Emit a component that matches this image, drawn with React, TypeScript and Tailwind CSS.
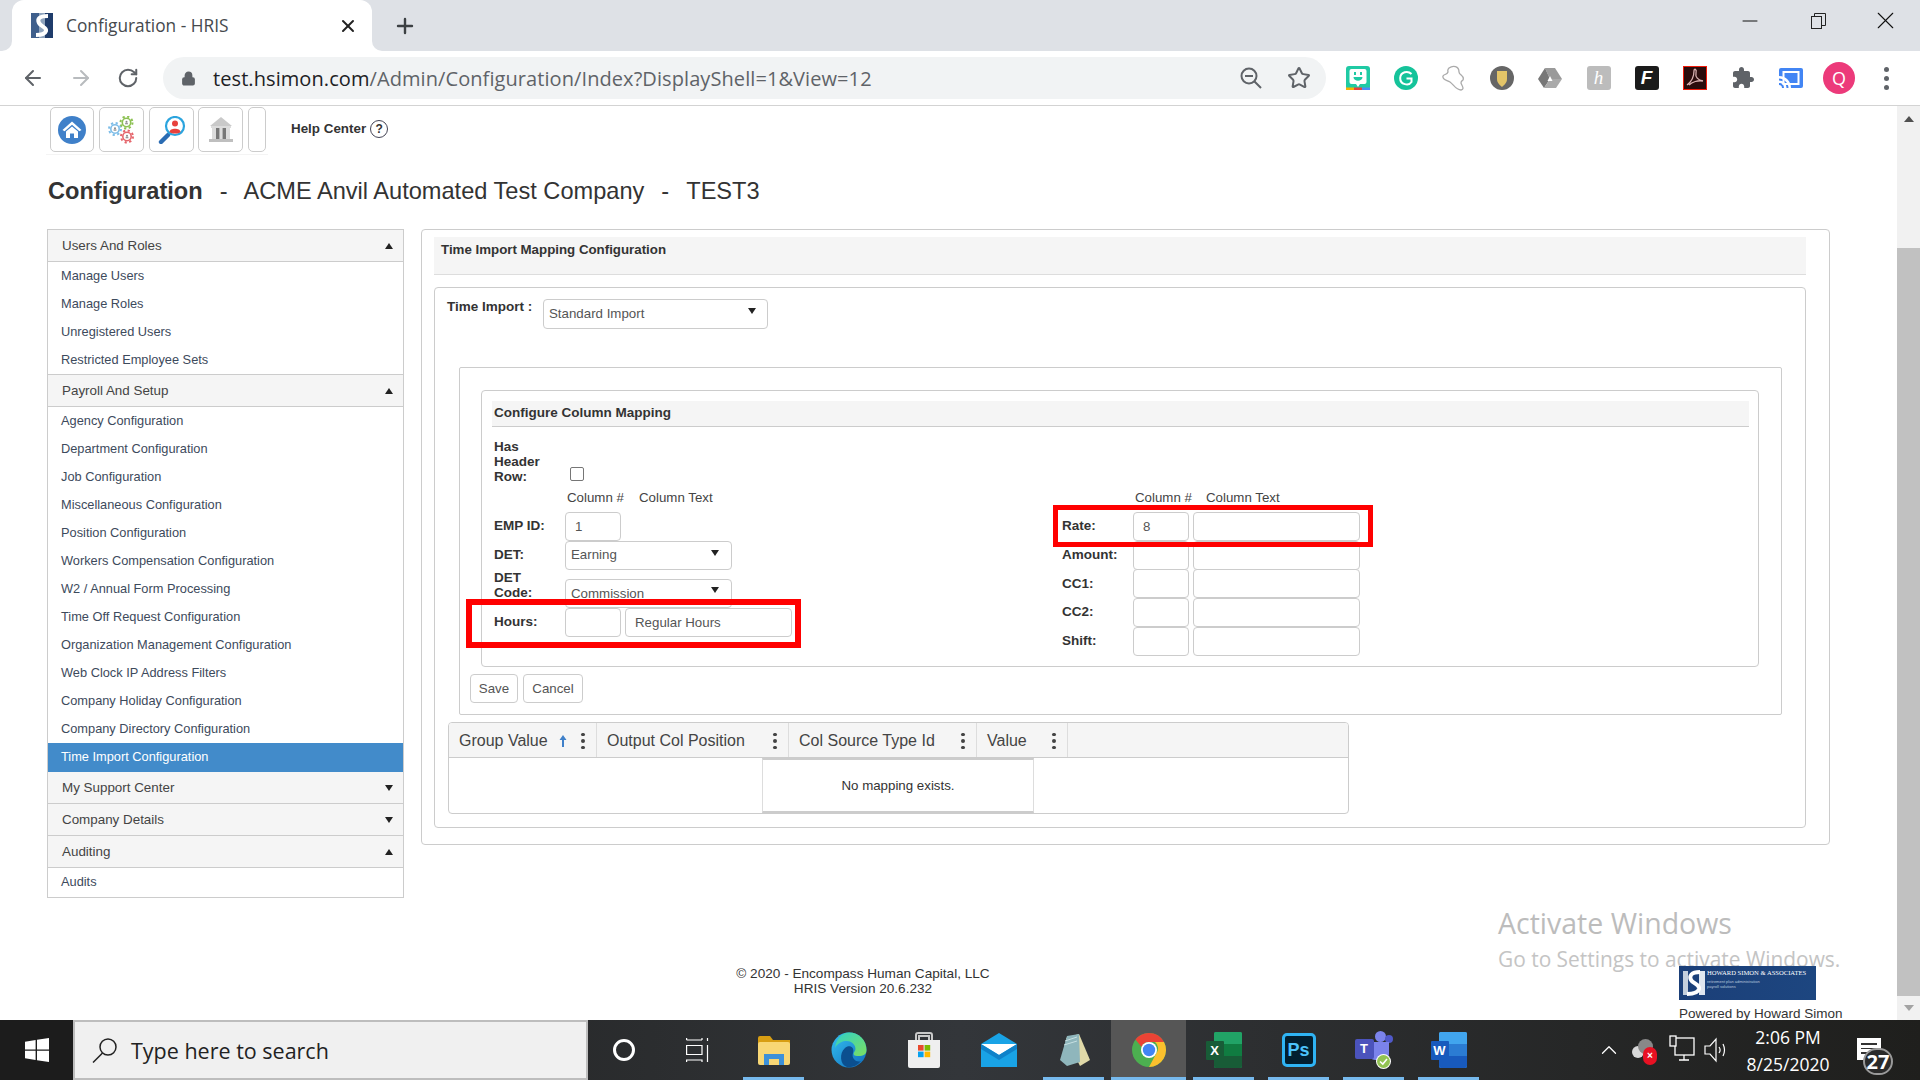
import React from "react";
import { ArrowLeft, ArrowRight, RotateCw, Star, Plus, X, Minus, Lock, ChevronUp } from "lucide-react";

const redBox = "absolute border-[#ff0000] pointer-events-none";
const field = "h-[29px] border border-[#cccccc] rounded-[4px] bg-white px-[9px] text-[13.3px] text-[#555] outline-none font-['Liberation_Sans',Arial,sans-serif]";

function Favicon() {
  return (
    <svg width="22" height="25" viewBox="0 0 22 25">
      <rect width="22" height="25" fill="#8ea3bd" />
      <rect x="0" y="0" width="8" height="25" fill="#3f5f8c" />
      <rect x="14" y="0" width="8" height="25" fill="#1f3c6b" />
      <path d="M17 3 C8 3 6 6 8 10 C10 14 16 14 15 18 C14 21 9 22 5 22" fill="none" stroke="#fff" strokeWidth="4" />
    </svg>
  );
}

function Gear({ cx, cy, c }: { cx: number; cy: number; c: string }) {
  return (
    <g>
      <circle cx={cx} cy={cy} r="6" fill="none" stroke={c} strokeWidth="2" strokeDasharray="2.2 2.5" />
      <circle cx={cx} cy={cy} r="4.2" fill="#fff" stroke={c} strokeWidth="1.6" />
      <circle cx={cx} cy={cy - 0.8} r="1" fill="#888" />
      <rect x={cx - 1.4} y={cy + 0.3} width="2.8" height="1.5" fill="#999" />
    </g>
  );
}

function HomeIcon() {
  return (
    <svg width="28" height="28" viewBox="0 0 28 28">
      <circle cx="14" cy="14" r="14" fill="#3f80c9" />
      <path d="M14 5.5 L23.5 14 L21.4 15.2 L14 8.8 L6.6 15.2 L4.5 14 Z" fill="#fff" />
      <path d="M8 15.5 L14 10.5 L20 15.5 V22 H16 V17.5 H12 V22 H8 Z" fill="#fff" />
    </svg>
  );
}
function GearsIcon() {
  return (
    <svg width="28" height="28" viewBox="0 0 28 28">
      <Gear cx={7} cy={13} c="#7dbde8" />
      <Gear cx={18.5} cy={6.5} c="#8cc152" />
      <Gear cx={19} cy={20.5} c="#e5656b" />
    </svg>
  );
}
function PersonIcon() {
  return (
    <svg width="28" height="28" viewBox="0 0 28 28">
      <path d="M10 19 L3 26" stroke="#2b6cb3" strokeWidth="4.4" strokeLinecap="round" />
      <circle cx="17" cy="10" r="9" fill="#fff" stroke="#2ba4de" strokeWidth="2.2" />
      <circle cx="17" cy="7.6" r="3" fill="#e8413c" />
      <path d="M11.5 16 C11.5 11.5 22.5 11.5 22.5 16 C20 18 14 18 11.5 16 Z" fill="#e8413c" />
    </svg>
  );
}
function BankIcon() {
  return (
    <svg width="28" height="28" viewBox="0 0 28 28">
      <path d="M14 1 L25 10 H3 Z" fill="#c9c9c9" />
      <rect x="4" y="10" width="20" height="2" fill="#dcdcdc" />
      <rect x="5" y="12" width="18" height="11" fill="#dcdcdc" />
      <rect x="9" y="12" width="3.4" height="11" fill="#777" />
      <rect x="15.6" y="12" width="3.4" height="11" fill="#777" />
      <rect x="2" y="23" width="24" height="3" fill="#bfbfbf" />
    </svg>
  );
}

function Tool({ w, children }: { w: string; children?: React.ReactNode }) {
  return (
    <div className={`${w} h-[45px] border border-[#cccccc] rounded-[5px] flex items-center justify-center bg-white shrink-0`}>
      {children}
    </div>
  );
}

function Ext({ children }: { children: React.ReactNode }) {
  return <div className="w-[48.1px] h-[32px] flex items-center justify-center">{children}</div>;
}

function Extensions() {
  return (
    <div className="flex items-center ml-[8px]">
      <Ext>
        <svg width="24" height="24" viewBox="0 0 24 24">
          <rect width="24" height="24" rx="3" fill="#1fcaa4" />
          <rect y="21.5" width="8" height="2.5" fill="#f5b400" />
          <rect x="8" y="21.5" width="8" height="2.5" fill="#e8413c" />
          <rect x="16" y="21.5" width="8" height="2.5" fill="#4c8bf5" />
          <rect x="3.5" y="3" width="17" height="15" rx="2" fill="#fff" />
          <rect x="8" y="6" width="2" height="3" fill="#1fcaa4" />
          <rect x="14" y="6" width="2" height="3" fill="#1fcaa4" />
          <path d="M7.5 11 H16.5 C16.5 16 7.5 16 7.5 11 Z" fill="#1fcaa4" />
          <path d="M10 18 L12 21 L14 18 Z" fill="#fff" />
        </svg>
      </Ext>
      <Ext>
        <svg width="24" height="24" viewBox="0 0 24 24">
          <circle cx="12" cy="12" r="12" fill="#15c39a" />
          <path d="M17.5 8 C14 4.5 6.5 5.5 6.2 12 C6 19 15 20 17.5 16 V12.5 H12.5" fill="none" stroke="#fff" strokeWidth="2" />
        </svg>
      </Ext>
      <Ext>
        <svg width="26" height="26" viewBox="0 0 26 26">
          <path d="M8 3 C12 0 18 1 18 7 C18 10 24 11 22 15 C21 16 20 16 20 18 C21 21 24 24 20 25 C15 25 13 20 9 17 C6 15 1 15 2 11 C3 9 6 10 7 7 C7 6 6 5 8 3 Z" fill="#fff" stroke="#aaa" strokeWidth="1.3" />
        </svg>
      </Ext>
      <Ext>
        <svg width="24" height="24" viewBox="0 0 24 24">
          <circle cx="12" cy="12" r="12" fill="#666" />
          <path d="M7 5 H17 V13 C17 17 14 19 12 21 C10 19 7 17 7 13 Z" fill="#e3c468" />
        </svg>
      </Ext>
      <Ext>
        <svg width="24" height="22" viewBox="0 0 24 22">
          <path d="M7 1 H17 L24 12 L12 12 Z" fill="#9a9a9a" />
          <path d="M7 1 L0 12 L6 21 L12 12 Z" fill="#777" />
          <path d="M6 21 H18 L24 12 H12 Z" fill="#aaa" />
          <path d="M12 9 L14.5 14 H9.5 Z" fill="#fff" />
        </svg>
      </Ext>
      <Ext>
        <div className="w-[24px] h-[24px] bg-[#bcbcbc] rounded-[3px] flex items-center justify-center text-white text-[19px] italic font-['Liberation_Serif',serif]">h</div>
      </Ext>
      <Ext>
        <div className="w-[24px] h-[24px] bg-[#1b1b1b] rounded-[3px] flex items-center justify-center text-white text-[19px] italic font-black font-['Liberation_Sans',sans-serif]">F</div>
      </Ext>
      <Ext>
        <svg width="24" height="24" viewBox="0 0 24 24">
          <rect x="0.5" y="0.5" width="23" height="23" fill="#2a0c0c" stroke="#f01a0a" />
          <path d="M4 19 C8 16 11 11 11 5 C11 2 14 3 13 7 C12 11 15 14 20 15 C15 14 9 16 6 19" fill="none" stroke="#d8b0b0" strokeWidth="1.3" />
        </svg>
      </Ext>
      <Ext>
        <svg width="24" height="24" viewBox="0 0 24 24" fill="#5f6368">
          <path d="M20.5 11H19V7c0-1.1-.9-2-2-2h-4V3.5C13 2.12 11.88 1 10.5 1S8 2.12 8 3.5V5H4c-1.1 0-1.99.9-1.99 2v3.8H3.5c1.49 0 2.7 1.21 2.7 2.7s-1.21 2.7-2.7 2.7H2V20c0 1.1.9 2 2 2h3.8v-1.5c0-1.49 1.21-2.7 2.7-2.7 1.49 0 2.7 1.21 2.7 2.7V22H17c1.1 0 2-.9 2-2v-4h1.5c1.38 0 2.5-1.12 2.5-2.5S21.88 11 20.5 11z" />
        </svg>
      </Ext>
      <Ext>
        <svg width="24" height="20" viewBox="0 0 24 20">
          <rect width="24" height="20" rx="2" fill="#4285f4" />
          <rect x="3.5" y="3" width="17" height="14" fill="#fff" />
          <rect x="5.5" y="5" width="13" height="10" fill="#4285f4" />
          <path d="M0 8 C7 8 12 13 12 20 H9.5 C9.5 15 5 10.5 0 10.5 Z" fill="#fff" />
          <path d="M0 12.5 C4.5 12.5 7.5 15.5 7.5 20 H5 C5 17 3 15 0 15 Z" fill="#fff" />
          <path d="M0 17 C1.8 17 3 18.2 3 20 H0 Z" fill="#fff" />
        </svg>
      </Ext>
      <div className="w-[48px] flex justify-center">
        <div className="w-[32px] h-[32px] rounded-full bg-[#ec3a7a] flex items-center justify-center text-white text-[18px] font-['Open_Sans',sans-serif]">Q</div>
      </div>
      <div className="w-[48px] flex flex-col items-center gap-[4px]">
        <span className="w-[5px] h-[5px] rounded-full bg-[#5f6368]" />
        <span className="w-[5px] h-[5px] rounded-full bg-[#5f6368]" />
        <span className="w-[5px] h-[5px] rounded-full bg-[#5f6368]" />
      </div>
    </div>
  );
}

function BrowserChrome() {
  return (
    <div className="shrink-0 font-['Open_Sans',sans-serif]">
      <div className="h-[51px] bg-[#dee1e6] flex items-end">
        <div className="relative ml-[12px] w-[360px] h-[51px] bg-white rounded-t-[12px] flex items-center pl-[19px]">
          <span className="absolute -left-[10px] bottom-0 w-[10px] h-[10px] bg-white">
            <span className="block w-full h-full bg-[#dee1e6] rounded-br-[10px]" />
          </span>
          <span className="absolute -right-[10px] bottom-0 w-[10px] h-[10px] bg-white">
            <span className="block w-full h-full bg-[#dee1e6] rounded-bl-[10px]" />
          </span>
          <Favicon />
          <span className="ml-[13px] text-[17.3px] text-[#45494d]">Configuration - HRIS</span>
          <X size={20} strokeWidth={2.4} className="ml-auto mr-[14px] text-[#222]" />
        </div>
        <div className="self-center ml-[21px]">
          <Plus size={24} strokeWidth={2.4} className="text-[#3c4043]" />
        </div>
        <div className="ml-auto self-start flex items-center h-[41px] text-[#111]">
          <div className="w-[68px] flex justify-center">
            <Minus size={24} strokeWidth={1} />
          </div>
          <div className="w-[68px] flex justify-center mr-[-2px]">
            <svg width="15" height="16" viewBox="0 0 15 16" fill="none" stroke="#222" strokeWidth="1">
              <rect x="0.5" y="3.5" width="10" height="12" fill="#dee1e6" />
              <path d="M3.5 3.5 V0.5 H14.5 V12.5 H10.5" />
            </svg>
          </div>
          <div className="w-[70px] flex justify-center">
            <X size={29} strokeWidth={0.9} />
          </div>
        </div>
      </div>
      <div className="h-[55px] bg-white border-b border-[#d3d3d3] flex items-center">
        <div className="w-[163px] flex items-center pl-[21px] gap-[24px] text-[#5f6368]">
          <ArrowLeft size={24} strokeWidth={2} />
          <ArrowRight size={24} strokeWidth={2} className="text-[#b8bbbe]" />
          <RotateCw size={22} strokeWidth={2.2} />
        </div>
        <div className="w-[1163px] h-[42px] rounded-full bg-[#f1f3f4] flex items-center pl-[18px]">
          <Lock size={15} strokeWidth={2.4} fill="#5f6368" className="text-[#5f6368]" />
          <span className="ml-[17px] text-[20px] tracking-[0.08px] text-[#5f6368] pt-[1px]">
            <span className="text-[#202124]">test.hsimon.com</span>/Admin/Configuration/Index?DisplayShell=1&amp;View=12
          </span>
          <div className="ml-auto flex items-center gap-[24px] mr-[15px] text-[#5f6368]">
            <svg width="24" height="24" viewBox="0 0 24 24" fill="none" stroke="#5f6368" strokeWidth="2">
              <circle cx="10" cy="10" r="7.5" />
              <path d="M6 10 H14 M15.5 15.5 L22 22" />
            </svg>
            <Star size={24} strokeWidth={2} />
          </div>
        </div>
        <Extensions />
      </div>
    </div>
  );
}

function SideHead({ label, open }: { label: string; open: boolean }) {
  return (
    <div className="h-[32px] bg-[#f5f5f5] border-b border-[#cccccc] flex items-center pl-[14px] pr-[10px] text-[13.4px] text-[#444] leading-none">
      <span className="flex-1">{label}</span>
      {open ? (
        <span className="w-0 h-0 border-x-[4.5px] border-x-transparent border-b-[6px] border-b-[#222]" />
      ) : (
        <span className="w-0 h-0 border-x-[4.5px] border-x-transparent border-t-[6px] border-t-[#222]" />
      )}
    </div>
  );
}
function SideItem({ label, active }: { label: string; active?: boolean }) {
  return (
    <div className={`flex items-center pl-[13px] text-[12.8px] leading-none ${active ? "h-[29px] bg-[#428bca] text-white" : "h-[28px] text-[#3d4a5c]"}`}>
      {label}
    </div>
  );
}

function Sidebar() {
  const group1 = ["Manage Users", "Manage Roles", "Unregistered Users", "Restricted Employee Sets"];
  const group2 = [
    "Agency Configuration",
    "Department Configuration",
    "Job Configuration",
    "Miscellaneous Configuration",
    "Position Configuration",
    "Workers Compensation Configuration",
    "W2 / Annual Form Processing",
    "Time Off Request Configuration",
    "Organization Management Configuration",
    "Web Clock IP Address Filters",
    "Company Holiday Configuration",
    "Company Directory Configuration",
  ];
  return (
    <div className="w-[357px] h-[669px] border border-[#cccccc] shrink-0 self-start">
      <SideHead label="Users And Roles" open />
      {group1.map((l) => <SideItem key={l} label={l} />)}
      <div className="border-t border-[#cccccc]" />
      <SideHead label="Payroll And Setup" open />
      {group2.map((l) => <SideItem key={l} label={l} />)}
      <SideItem label="Time Import Configuration" active />
      <SideHead label="My Support Center" open={false} />
      <SideHead label="Company Details" open={false} />
      <SideHead label="Auditing" open />
      <SideItem label="Audits" />
    </div>
  );
}

function Label({ children, pb = "pb-[3px]" }: { children: React.ReactNode; pb?: string }) {
  return <div className={`w-[71px] shrink-0 text-[13.5px] font-bold text-[#333] leading-[15px] ${pb}`}>{children}</div>;
}
function Sel({ text, pad = "pb-[2px]", arrowTop = "-mt-[6px]" }: { text: string; pad?: string; arrowTop?: string }) {
  return (
    <div className="w-[167px] h-[29px] border border-[#cccccc] rounded-[4px] bg-white flex items-center pl-[5px] pr-[12px] text-[13.3px] text-[#555]">
      <span className={`flex-1 ${pad}`}>{text}</span>
      <span className={`w-0 h-0 border-x-[4.5px] border-x-transparent border-t-[6px] border-t-[#222] ${arrowTop}`} />
    </div>
  );
}
function Field({ w, value }: { w: string; value?: string }) {
  return <input readOnly value={value ?? ""} className={`${w} ${field}`} />;
}
function Dots() {
  return (
    <span className="w-[4px] flex flex-col gap-[3px] items-center shrink-0">
      <span className="w-[3.5px] h-[3.5px] rounded-full bg-[#444]" />
      <span className="w-[3.5px] h-[3.5px] rounded-full bg-[#444]" />
      <span className="w-[3.5px] h-[3.5px] rounded-full bg-[#444]" />
    </span>
  );
}

function Mapping() {
  const right = ["Rate:", "Amount:", "CC1:", "CC2:", "Shift:"];
  return (
    <div className="ml-[21px] mt-[22px] w-[1278px] h-[277px] border border-[#cccccc] rounded-[4px]">
      <div className="mt-[10px] ml-[10px] w-[1257px] h-[26px] bg-[#f5f5f5] border-b border-[#cccccc] flex items-center pl-[2px] text-[13.5px] font-bold text-[#333]">
        Configure Column Mapping
      </div>
      <div className="flex ml-[12px]">
        <div className="w-[568px] shrink-0">
          <div className="flex mt-[11px] h-[46px]">
            <div className="pt-[1px]">
              <Label pb="pb-0">Has<br />Header<br />Row:</Label>
            </div>
            <input type="checkbox" readOnly className="ml-[5px] mt-[29px] w-[14px] h-[14px] appearance-none border border-[#767676] rounded-[2px] bg-white" />
          </div>
          <div className="flex h-[28px] items-center text-[13.3px] text-[#444]">
            <span className="w-[71px]" />
            <span className="w-[74px] pl-[2px]">Column #</span>
            <span>Column Text</span>
          </div>
          <div className="flex items-center h-[29px]">
            <Label>EMP ID:</Label>
            <Field w="w-[56px]" value="1" />
          </div>
          <div className="flex items-center h-[29px]">
            <Label pb="pb-[2px]">DET:</Label>
            <Sel text="Earning" />
          </div>
          <div className="flex items-end h-[38px]">
            <Label pb="pb-[8px]">DET<br />Code:</Label>
            <Sel text="Commission" pad="pb-0" arrowTop="-mt-[8px]" />
          </div>
          <div className="flex items-center h-[29px]">
            <Label>Hours:</Label>
            <Field w="w-[56px]" />
            <input readOnly value="Regular Hours" className={`w-[167px] ml-[4px] ${field}`} />
          </div>
        </div>
        <div className="pt-[57px]">
          <div className="flex h-[28px] items-center text-[13.3px] text-[#444]">
            <span className="w-[71px]" />
            <span className="w-[73px] pl-[2px]">Column #</span>
            <span>Column Text</span>
          </div>
          {right.map((r) => (
            <div key={r} className="flex items-center h-[28.7px]">
              <Label pb="pb-[1px]">{r}</Label>
              <Field w="w-[56px]" value={r === "Rate:" ? "8" : ""} />
              <Field w="w-[167px] ml-[4px]" />
            </div>
          ))}
        </div>
      </div>
    </div>
  );
}

function TableHeadCell({ w, label, sort }: { w: string; label: string; sort?: boolean }) {
  return (
    <div className={`${w} h-full border-r border-[#dddddd] flex items-center pl-[10px] pr-[11px] pt-[2px] text-[16px] text-[#444] shrink-0`}>
      <span className="flex-1 whitespace-nowrap">{label}</span>
      {sort && (
        <svg width="8" height="14" viewBox="0 0 8 14" className="mr-[14px]">
          <path d="M4 1 L7.5 6 H5 V13 H3 V6 H0.5 Z" fill="#3f80c9" />
        </svg>
      )}
      <Dots />
    </div>
  );
}

function Grid() {
  return (
    <div className="ml-[13px] mt-[7px] w-[901px] h-[92px] border border-[#cccccc] rounded-[4px] overflow-hidden">
      <div className="h-[35px] bg-[#f5f5f5] border-b border-[#cccccc] flex">
        <TableHeadCell w="w-[148px]" label="Group Value" sort />
        <TableHeadCell w="w-[192px]" label="Output Col Position" />
        <TableHeadCell w="w-[188px]" label="Col Source Type Id" />
        <TableHeadCell w="w-[91px]" label="Value" />
      </div>
      <div className="flex h-[55px]">
        <div className="w-[313px] shrink-0" />
        <div className="w-[272px] h-full border-x border-[#dddddd] border-y-2 border-y-[#cccccc] flex items-center justify-center text-[13.3px] text-[#333] shrink-0">
          No mapping exists.
        </div>
      </div>
    </div>
  );
}

function MainPanel() {
  return (
    <div className="ml-[17px] w-[1409px] h-[616px] border border-[#cccccc] rounded-[4px] px-[12px] pt-[7px] shrink-0">
      <div className="h-[38px] bg-[#f5f5f5] border-b border-[#dddddd] pl-[7px] pt-[3px] text-[13.3px] font-bold text-[#333] w-[1372px]">
        Time Import Mapping Configuration
      </div>
      <div className="mt-[12px] w-[1372px] h-[541px] border border-[#cccccc] rounded-[4px]">
        <div className="flex mt-[11px] ml-[12px]">
          <div className="w-[96px] text-[13.5px] font-bold text-[#333] leading-[15px]">Time Import :</div>
          <div className="w-[225px] h-[30px] border border-[#cccccc] rounded-[4px] flex items-center pl-[5px] pr-[11px] text-[13.3px] text-[#555]">
            <span className="flex-1">Standard Import</span>
            <span className="w-0 h-0 border-x-[4.5px] border-x-transparent border-t-[6px] border-t-[#222] -mt-[6px]" />
          </div>
        </div>
        <div className="ml-[24px] mt-[38px] w-[1323px] h-[348px] border border-[#cccccc] rounded-[2px]">
          <Mapping />
          <div className="flex ml-[10px] mt-[7px] gap-[5px]">
            <div className="w-[48px] h-[29px] border border-[#cccccc] rounded-[4px] flex items-center justify-center text-[13.3px] text-[#555]">Save</div>
            <div className="w-[60px] h-[29px] border border-[#cccccc] rounded-[4px] flex items-center justify-center text-[13.3px] text-[#555]">Cancel</div>
          </div>
        </div>
        <Grid />
      </div>
    </div>
  );
}

function Page() {
  return (
    <div className="flex-1 min-w-0 h-full overflow-hidden font-['Liberation_Sans',Arial,sans-serif]">
      <div className="h-[49px] flex pl-[46px] items-start">
        <div className="w-[222px] h-[49px] pl-[4px] pt-[1px] flex items-start gap-[5px] border-b border-[#f4f4f4]">
          <Tool w="w-[44px]"><HomeIcon /></Tool>
          <Tool w="w-[45px]"><GearsIcon /></Tool>
          <Tool w="w-[45px]"><PersonIcon /></Tool>
          <div className="-ml-[1px]"><Tool w="w-[45px]"><BankIcon /></Tool></div>
          <Tool w="w-[18px]" />
        </div>
        <div className="ml-[23px] h-[46px] flex items-center text-[13.4px] font-bold text-[#333]">
          Help Center
          <span className="ml-[4px] w-[18px] h-[18px] rounded-full border border-[#445] flex items-center justify-center text-[12px] leading-none">?</span>
        </div>
      </div>
      <div className="h-[74px] flex items-center pl-[48px] text-[23.6px] text-[#333] whitespace-pre">
        <span className="font-bold">Configuration</span>
        <span className="ml-[17px]">-</span>
        <span className="ml-[16px]">ACME Anvil Automated Test Company</span>
        <span className="ml-[17px]">-</span>
        <span className="ml-[17px]">TEST3</span>
      </div>
      <div className="flex pl-[47px]">
        <Sidebar />
        <MainPanel />
      </div>
      <div className="flex mt-[68px]">
        <div className="w-[1679px] pl-[47px] text-center text-[13.6px] leading-[15px] text-[#333]">
          <div>© 2020 - Encompass Human Capital, LLC</div>
          <div>HRIS Version 20.6.232</div>
        </div>
        <div className="relative z-10">
          <div className="w-[137px] h-[34px] bg-linear-to-r from-[#1b3f78] to-[#1d4680] flex items-center pl-[3px] overflow-hidden">
            <svg width="24" height="28" viewBox="0 0 24 28" className="shrink-0">
              <rect x="1" y="2" width="5" height="24" fill="#c4cfdd" />
              <rect x="17" y="2" width="6" height="24" fill="#dfe6ef" />
              <path d="M18 3 C9 3 7 7 9 11 C11 15 18 15 17 20 C16 24 10 25 5 25" fill="none" stroke="#fff" strokeWidth="4" />
            </svg>
            <div className="ml-[1px] text-white self-start pt-[1px]">
              <div className="text-[6.6px] leading-[12px] whitespace-nowrap font-['Liberation_Serif',serif]">HOWARD SIMON &amp; ASSOCIATES</div>
              <div className="text-[4px] leading-[5px] text-[#b9c8de]">retirement plan administration</div>
              <div className="text-[4px] leading-[5px] text-[#b9c8de]">payroll solutions</div>
            </div>
          </div>
          <div className="mt-[6px] text-[13.5px] leading-[15px] text-[#333] whitespace-nowrap">Powered by Howard Simon</div>
        </div>
      </div>
    </div>
  );
}

function Scrollbar() {
  return (
    <div className="w-[23px] h-full bg-[#f1f1f1] flex flex-col shrink-0 items-center">
      <div className="h-[25px] w-full flex items-center justify-center">
        <span className="w-0 h-0 border-x-[5px] border-x-transparent border-b-[6px] border-b-[#505050]" />
      </div>
      <div className="mt-[117px] h-[748px] w-full bg-[#c1c1c1]" />
      <div className="flex-1 w-full flex items-center justify-center">
        <span className="w-0 h-0 border-x-[5px] border-x-transparent border-t-[6px] border-t-[#a3a3a3]" />
      </div>
    </div>
  );
}

function TaskSlot({ children, under, active, w = "w-[75px]" }: { children: React.ReactNode; under?: boolean; active?: boolean; w?: string }) {
  return (
    <div className={`${w} h-full relative flex items-center justify-center shrink-0 ${active ? "bg-[#565656]" : ""}`}>
      {children}
      {under && <span className={`absolute bottom-0 h-[3px] bg-[#76b9ed] ${active ? "inset-x-0" : "left-[7px] right-[7px]"}`} />}
    </div>
  );
}

function OfficeIcon({ letter, back, mid, front }: { letter: string; back: string; mid: string; front: string }) {
  return (
    <div className="relative w-[36px] h-[36px]">
      <div className="absolute right-0 top-0 w-[28px] h-[36px] rounded-[2px] flex flex-col overflow-hidden" style={{ background: back }}>
        <div className="h-[12px]" style={{ background: back }} />
        <div className="h-[12px]" style={{ background: mid }} />
        <div className="h-[12px]" style={{ background: front }} />
      </div>
      <div className="absolute left-0 top-[9px] w-[18px] h-[19px] rounded-[1px] flex items-center justify-center text-white text-[13px] font-bold font-['Liberation_Sans',sans-serif]" style={{ background: front }}>{letter}</div>
    </div>
  );
}

function Taskbar() {
  return (
    <div className="h-[60px] shrink-0 bg-linear-to-r from-[#1b1b19] via-[#33363a] to-[#1f1f1d] flex text-white font-['Open_Sans',sans-serif]">
      <div className="w-[73px] h-full flex items-center justify-center bg-[#1c1c1c]">
        <svg width="24" height="24" viewBox="0 0 26 26" fill="#fff">
          <path d="M0 4 L11.5 2.3 V12.4 H0 Z M13 2 L26 0 V12.4 H13 Z M0 13.8 H11.5 V23.8 L0 22 Z M13 13.8 H26 V26 L13 24 Z" />
        </svg>
      </div>
      <div className="w-[515px] h-full bg-[#f0f0f0] border-2 border-[#bdbdbd] flex items-center pl-[17px] text-[#222]">
        <svg width="26" height="26" viewBox="0 0 26 26" fill="none" stroke="#222" strokeWidth="1.5">
          <circle cx="16" cy="10" r="8" />
          <path d="M10.5 16 L1 25.5" />
        </svg>
        <span className="ml-[13px] text-[21.5px] pt-[3px]">Type here to search</span>
      </div>
      <TaskSlot w="w-[71px]">
        <span className="w-[22px] h-[22px] rounded-full border-[3.5px] border-white" />
      </TaskSlot>
      <TaskSlot w="w-[77px]">
        <svg width="24" height="26" viewBox="0 0 24 26" fill="none" stroke="#fff" strokeWidth="1.2">
          <path d="M0.6 3 H16 M0.6 1 V3 M16 1 V3 M0.6 8.5 H16 V17.5 H0.6 Z M0.6 25 V23 H16 V25 M21.5 1 V4 M21.5 8 V25" />
        </svg>
      </TaskSlot>
      <TaskSlot under>
        <svg width="32" height="32" viewBox="0 0 32 32">
          <path d="M0 4 a2 2 0 0 1 2 -2 H12 L15 6 H32 V12 H0 Z" fill="#d89e13" />
          <rect y="8" width="32" height="23" rx="2" fill="#f8d775" />
          <path d="M6 31 V20 H26 V31 H21 V25 H11 V31 Z" fill="#3d91d9" />
        </svg>
      </TaskSlot>
      <TaskSlot>
        <svg width="36" height="36" viewBox="0 0 36 36">
          <defs>
            <linearGradient id="edgeA" x1="0" y1="0" x2="1" y2="1">
              <stop offset="0" stopColor="#35c1f1" />
              <stop offset="1" stopColor="#0f6cbd" />
            </linearGradient>
            <linearGradient id="edgeB" x1="0" y1="0" x2="1" y2="1">
              <stop offset="0" stopColor="#2fd0c8" />
              <stop offset="1" stopColor="#7cdf60" />
            </linearGradient>
          </defs>
          <circle cx="18" cy="18" r="17.5" fill="url(#edgeA)" />
          <path d="M18 0.5 C28 0.5 35.5 8 35.5 18 C35.5 24 30 24 26 24 C22 24 22 21 24 19 C26 15 22 8 14 9 C10 9.5 6 12 4 16 C5 7 11 0.5 18 0.5 Z" fill="url(#edgeB)" />
          <path d="M14 16 C18 12 24 15 22 21 C20 27 26 31 30 29 C26 34 20 36 16 35 C9 33 8 21 14 16 Z" fill="#0b4f8f" />
        </svg>
      </TaskSlot>
      <TaskSlot>
        <svg width="34" height="38" viewBox="0 0 34 38">
          <path d="M9 9 V4 a2 2 0 0 1 2 -2 H23 a2 2 0 0 1 2 2 V9 M12 9 V5 H22 V9" fill="none" stroke="#c9c9c9" strokeWidth="2" />
          <path d="M1 9 H33 V35 a2 2 0 0 1 -2 2 H3 a2 2 0 0 1 -2 -2 Z" fill="#efefef" />
          <rect x="11" y="14" width="5.6" height="5.6" fill="#e8492e" />
          <rect x="17.6" y="14" width="5.6" height="5.6" fill="#7db900" />
          <rect x="11" y="20.6" width="5.6" height="5.6" fill="#08a1f0" />
          <rect x="17.6" y="20.6" width="5.6" height="5.6" fill="#ffb900" />
        </svg>
      </TaskSlot>
      <TaskSlot>
        <svg width="36" height="34" viewBox="0 0 36 34">
          <path d="M0 11 L18 0 L36 11 V34 H0 Z" fill="#19a3e6" />
          <path d="M0 11 H36 L18 22 Z" fill="#fff" />
          <path d="M0 11 L18 22 L36 11 V16 L18 27 L0 16 Z" fill="#0f82c9" />
        </svg>
      </TaskSlot>
      <TaskSlot under>
        <svg width="32" height="32" viewBox="0 0 32 32">
          <path d="M8 4 L21 0 L32 26 L22 32 Z" fill="#e0d9a8" />
          <path d="M2 26 L9 2 L21 0 L22 28 L9 32 Z" fill="#8fb6bc" />
          <path d="M7 7 L19 3 M6 11 L19 7" stroke="#c7e0e2" strokeWidth="1" />
        </svg>
      </TaskSlot>
      <TaskSlot under active>
        <svg width="34" height="34" viewBox="0 0 34 34">
          <circle cx="17" cy="17" r="17" fill="#4caf50" />
          <path d="M17 0 A17 17 0 0 1 32 9 H17 A8 8 0 0 0 9.5 14 L3.5 6.5 A17 17 0 0 1 17 0 Z" fill="#ea4335" />
          <path d="M32 9 A17 17 0 0 1 17 34 L24.5 20 A8 8 0 0 0 23 9 Z" fill="#fbc02d" />
          <circle cx="17" cy="17" r="8" fill="#fff" />
          <circle cx="17" cy="17" r="6.2" fill="#4285f4" />
        </svg>
      </TaskSlot>
      <TaskSlot under>
        <OfficeIcon letter="X" back="#21a366" mid="#107c41" front="#185c37" />
      </TaskSlot>
      <TaskSlot under>
        <div className="w-[34px] h-[34px] rounded-[5px] bg-[#021f30] border-[3px] border-[#2fb4f5] flex items-center justify-center text-[#4cc3fb] text-[18px] font-bold font-['Liberation_Sans',sans-serif]">Ps</div>
      </TaskSlot>
      <TaskSlot under>
        <div className="relative w-[38px] h-[40px]">
          <span className="absolute left-[20px] top-[1px] w-[11px] h-[11px] rounded-full bg-[#7b83eb]" />
          <span className="absolute left-[30px] top-[5px] w-[8px] h-[8px] rounded-full bg-[#5059c9]" />
          <span className="absolute left-[14px] top-[12px] w-[20px] h-[18px] rounded-b-[6px] bg-[#7b83eb]" />
          <span className="absolute left-0 top-[9px] w-[19px] h-[20px] rounded-[2px] bg-[#4b53bc] flex items-center justify-center text-white text-[13px] font-bold font-['Liberation_Sans',sans-serif]">T</span>
          <span className="absolute left-[21px] top-[24px] w-[15px] h-[15px] rounded-full bg-white flex items-center justify-center">
            <svg width="15" height="15" viewBox="0 0 15 15">
              <circle cx="7.5" cy="7.5" r="6.5" fill="#92c353" />
              <path d="M4 7.5 L6.8 10 L11 5" fill="none" stroke="#fff" strokeWidth="1.6" />
            </svg>
          </span>
        </div>
      </TaskSlot>
      <TaskSlot under>
        <OfficeIcon letter="W" back="#41a5ee" mid="#2b7cd3" front="#185abd" />
      </TaskSlot>
      <div className="w-[105px] shrink-0" />
      <div className="w-[36px] flex items-center justify-center">
        <ChevronUp size={26} strokeWidth={1.2} />
      </div>
      <div className="w-[36px] flex items-center justify-center">
        <div className="relative w-[26px] h-[24px]">
          <span className="absolute left-0 top-[8px] w-[12px] h-[12px] rounded-full bg-[#d8d8d8]" />
          <span className="absolute left-[6px] top-[1px] w-[15px] h-[15px] rounded-full bg-[#888]" />
          <span className="absolute left-[11px] top-[9px] w-[14px] h-[18px] rounded-full bg-[#e81123] flex items-center justify-center text-[10px] font-bold leading-none font-['Liberation_Sans',sans-serif]">×</span>
        </div>
      </div>
      <div className="w-[37px] flex items-center justify-center">
        <svg width="26" height="30" viewBox="0 0 26 30" fill="none" stroke="#fff" strokeWidth="1.3">
          <rect x="6" y="3" width="19" height="17" />
          <path d="M15 20 V25 M10 25 H20" />
          <rect x="1" y="1" width="6" height="10" fill="#2c2c2c" />
        </svg>
      </div>
      <div className="w-[32px] flex items-center justify-center">
        <svg width="24" height="28" viewBox="0 0 24 28" fill="none" stroke="#fff" strokeWidth="1.2">
          <path d="M1 10 H6 L12 3 V25 L6 18 H1 Z M15 11 C16.5 13 16.5 15 15 17 M19 8 C21 12 21 16 19 20" />
        </svg>
      </div>
      <div className="w-[112px] flex flex-col items-center justify-center gap-[7px] text-[17.5px] leading-[20px]">
        <span>2:06 PM</span>
        <span>8/25/2020</span>
      </div>
      <div className="relative flex-1">
        <div className="absolute left-[13px] top-[18px] w-[24px] h-[22px] bg-white flex flex-col gap-[3px] items-center pt-[5px]">
          <span className="w-[16px] h-[1.5px] bg-[#333]" />
          <span className="w-[16px] h-[1.5px] bg-[#333]" />
          <span className="w-[16px] h-[1.5px] bg-[#333]" />
        </div>
        <div className="absolute left-[19px] top-[28px] w-[30px] h-[27px] rounded-full bg-[#2a2a2a] border-2 border-[#9a9a9a] flex items-center justify-center text-[20px] font-bold leading-none">27</div>
      </div>
    </div>
  );
}

export default function App() {
  return (
    <div className="relative w-[1920px] h-[1080px] flex flex-col overflow-hidden bg-white font-['Liberation_Sans',Arial,sans-serif]">
      <BrowserChrome />
      <div className="h-[914px] flex shrink-0">
        <Page />
        <Scrollbar />
      </div>
      <Taskbar />
      <div className="absolute left-[1498px] top-[905px] text-[28.5px] leading-[36px] text-[#bcbcbc] font-['Open_Sans',sans-serif]">Activate Windows</div>
      <div className="absolute left-[1498px] top-[945px] text-[20.9px] leading-[28px] text-[#c4c4c4] whitespace-nowrap font-['Open_Sans',sans-serif]">Go to Settings to activate Windows.</div>
      <div className={`${redBox} left-[466px] top-[599px] w-[335px] h-[49px] border-[6px]`} />
      <div className={`${redBox} left-[1053px] top-[505px] w-[320px] h-[42px] border-[5px]`} />
    </div>
  );
}
